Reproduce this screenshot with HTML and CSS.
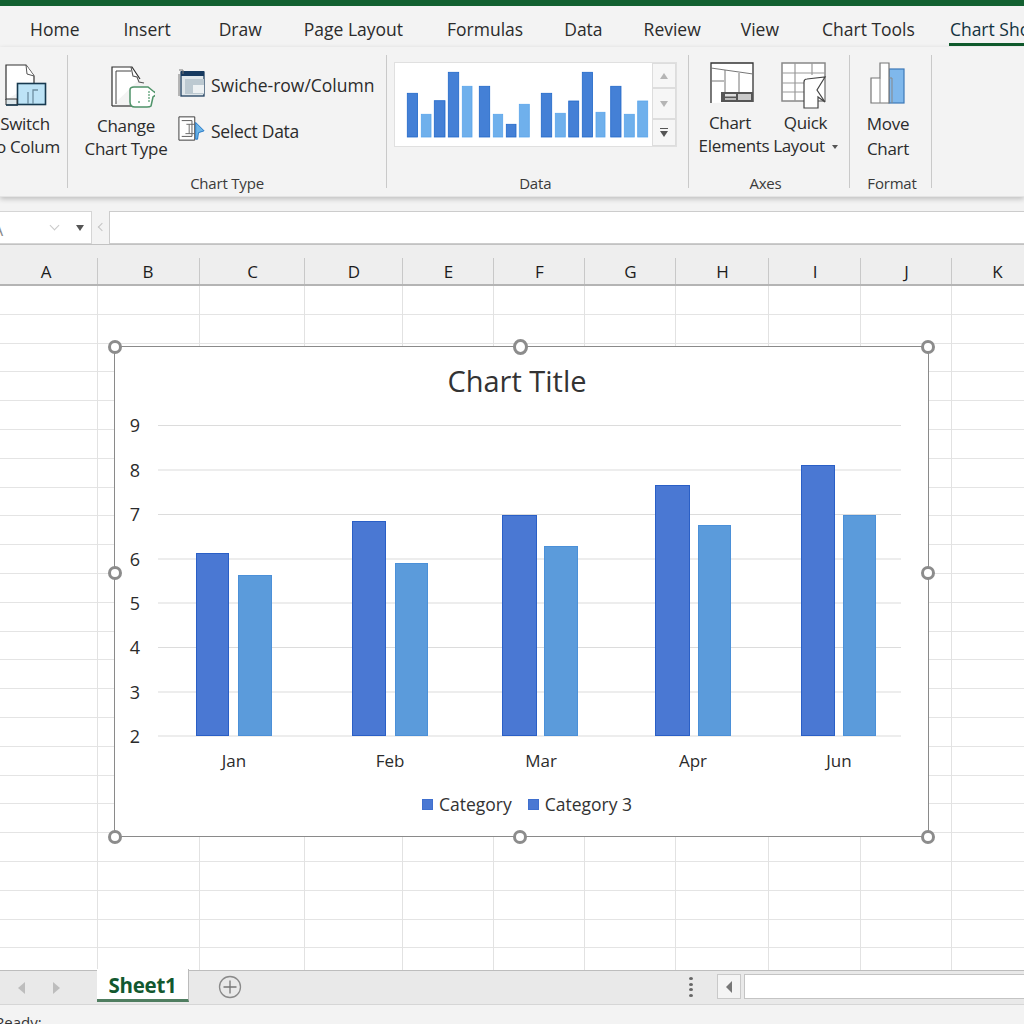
FILE: index.html
```html
<!DOCTYPE html>
<html lang="en">
<head>
<meta charset="utf-8">
<title>Chart Show</title>
<link rel="stylesheet" href="styles.css">
</head>
<body>
<div class="titlebar"></div>
<nav class="tabs">
  <span class="tab">Home</span><span class="tab">Insert</span><span class="tab t-draw">Draw</span><span class="tab t-page">Page Layout</span><span class="tab">Formulas</span><span class="tab t-data">Data</span><span class="tab t-review">Review</span><span class="tab t-view">View</span><span class="tab t-tools">Chart Tools</span><span class="tab active">Chart Show</span>
</nav>
<section class="ribbon">
  <div class="group g-switch">
    <div class="big-btn switch-btn">
      <svg class="icon" width="50" height="44" viewBox="0 0 50 44"><path d="M5 37V2h20l8 11v7" fill="#fff" stroke="#333" stroke-width="1.2"/><path d="M25 2l1 9 7 2" fill="#fff" stroke="#555"/><rect x="16.500" y="20.500" width="28" height="21" fill="#bde3f6" stroke="#17394f" stroke-width="1.600"/><path d="M5 42V36h11v6z" fill="#dce6ea" stroke="#333"/><path d="M5 42h12" stroke="#17394f" stroke-width="1.500"/><path d="M27 41V29M32 41V27h5" stroke="#6d8ea0" stroke-width="1.300" fill="none"/></svg>
      <span class="btn-text">Switch<br>to Colum</span>
    </div>
  </div>
  <div class="group g-type">
    <div class="group-body type-body">
      <div class="big-btn change-btn">
        <svg class="icon" width="44" height="42" viewBox="0 0 44 42"><path d="M1 40V1h20l8 12" fill="#fff" stroke="#2f2f2f" stroke-width="1.200"/><path d="M5 38V5h15" fill="none" stroke="#444"/><path d="M1 40h22" stroke="#2f2f2f" stroke-width="1.200"/><path d="M20 1l2 9 4 1 2 5 5 1" fill="none" stroke="#555" stroke-width="1.100"/><path d="M19 24q0-3 4-3h14l5 4 4 3-4 3-2 9q-1 1-4 1H24q-5 0-5-5z" fill="#fff" stroke="#4f9369" stroke-width="1.500"/><path d="M27 36h2M38 25v11" stroke="#6aa982" stroke-width="1.400" stroke-dasharray="2 1"/></svg>
        <span class="btn-text">Change<br>Chart Type</span>
      </div>
      <div class="small-col">
        <div class="small-btn"><svg width="27" height="28" viewBox="0 0 27 28"><rect x="3" y="3" width="23" height="24" fill="#dfe6ea" stroke="#1f3f5f" stroke-width="1.300"/><rect x="3" y="2" width="23" height="5" fill="#16395f"/><rect x="7" y="10" width="19" height="15" fill="#bcc9d1"/><rect x="15" y="16" width="11" height="8" fill="#edf1f3"/><path d="M1 1h4v4M1 5v22" fill="none" stroke="#777"/></svg><span>Swiche-row/Column</span></div>
        <div class="small-btn select-btn"><svg width="27" height="27" viewBox="0 0 29 27"><path d="M1 1h17v25H1z" fill="#fff" stroke="#333"/><path d="M4 5h11v17H4" fill="none" stroke="#555"/><path d="M9 9h9M12 9v10M8 19h10" stroke="#666" fill="none"/><path d="M19 7l9 9-6 2-1 7h-2z" fill="#6fb6e8" stroke="#1d73c4"/></svg><span>Select Data</span></div>
      </div>
    </div>
    <div class="group-label">Chart Type</div>
  </div>
  <div class="group g-data">
    <div class="group-body data-body">
      <div class="gallery">
        <svg width="258" height="84" viewBox="394 62 258 84">
          <g class="gal-dark"><rect x="407.300" y="93.300" width="10.300" height="43.700"/><rect x="434.300" y="100.700" width="10.700" height="36.300"/><rect x="448.300" y="72.300" width="10.400" height="64.700"/><rect x="479.300" y="86.300" width="10.400" height="50.700"/><rect x="506.300" y="124.300" width="9.700" height="12.700"/><rect x="541.300" y="93.300" width="10.400" height="43.700"/><rect x="568.700" y="101" width="10" height="36"/><rect x="582.300" y="72.300" width="10.300" height="64.700"/><rect x="610.700" y="86.300" width="10.300" height="50.700"/></g>
          <g class="gal-light"><rect x="421.300" y="114.300" width="9.700" height="22.700"/><rect x="462.300" y="86.300" width="9.700" height="50.700"/><rect x="493.300" y="114.300" width="9.400" height="22.700"/><rect x="519.300" y="104.300" width="10" height="32.700"/><rect x="555.300" y="113.300" width="10" height="23.700"/><rect x="596" y="112.300" width="9" height="24.700"/><rect x="624.300" y="114.300" width="10" height="22.700"/><rect x="637.700" y="101" width="10" height="36"/></g>
        </svg>
        <div class="gal-scroll">
          <div class="gal-btn up"><i class="tri-up"></i></div>
          <div class="gal-btn down"><i class="tri-down"></i></div>
          <div class="gal-btn more"><i class="more-bar"></i><i class="tri-more"></i></div>
        </div>
      </div>
    </div>
    <div class="group-label">Data</div>
  </div>
  <div class="group g-axes">
    <div class="group-body axes-body">
      <div class="big-btn elements-btn">
        <svg class="icon" width="44" height="42" viewBox="0 0 44 42"><path d="M1 41V1h42v39" fill="#fff" stroke="#333" stroke-width="1.300"/><path d="M1 6l42 6M1 19h13M15 8v26M29 11v24" fill="none" stroke="#777"/><rect x="11" y="30" width="32" height="10" fill="#555"/><rect x="15" y="32" width="11" height="2.500" fill="#ddd"/><rect x="15" y="36" width="11" height="2" fill="#bbb"/><rect x="28" y="32" width="13" height="6" fill="#c9c9c9"/></svg>
        <span class="btn-text"><span class="chart-line">Chart</span><br>Elements</span>
      </div>
      <div class="big-btn layout-btn">
        <svg class="icon" width="46" height="47" viewBox="0 0 46 47"><rect x="1" y="1" width="43" height="38" fill="#fff" stroke="#888" stroke-width="1.500"/><path d="M1 11h43M1 21h25M1 30h22M14 1v38M31 1v12" stroke="#999" fill="none" stroke-width="1.200"/><path d="M23 46V20q0-3 3-3l18-2-8 13 8 12-7-5v11z" fill="#fff" stroke="#444" stroke-width="1.200"/></svg>
        <span class="btn-text">Quick<br>Layout<i class="caret"></i></span>
      </div>
    </div>
    <div class="group-label">Axes</div>
  </div>
  <div class="group g-format">
    <div class="group-body format-body">
      <div class="big-btn move-btn">
        <svg class="icon" width="36" height="42" viewBox="0 0 36 42"><rect x="19" y="7" width="15" height="34" fill="#7fb8ec" stroke="#3c78b8" stroke-width="1.200"/><path d="M1 41V16h9V1h9v40z" fill="#fff" stroke="#777" stroke-width="1.200"/><path d="M10 16v25M19 16h3v25" stroke="#888" fill="none"/></svg>
        <span class="btn-text">Move<br>Chart</span>
      </div>
    </div>
    <div class="group-label">Format</div>
  </div>
</section>
<section class="formula-bar">
  <div class="name-box"><span class="name-val">A</span><span class="name-chev"></span><i class="tri-name"></i></div>
  <span class="fx-mark"></span>
  <div class="formula-input"></div>
</section>
<div class="col-headers">
  <span class="ch w-a">A</span><span class="ch w-b">B</span><span class="ch w-c">C</span><span class="ch w-d">D</span><span class="ch w-e">E</span><span class="ch w-f">F</span><span class="ch w-g">G</span><span class="ch w-h">H</span><span class="ch w-i">I</span><span class="ch w-j">J</span><span class="ch w-k">K</span>
</div>
<main class="sheet">
  <div class="cols">
    <i class="w-a"></i><i class="w-b"></i><i class="w-c"></i><i class="w-d"></i><i class="w-e"></i><i class="w-f"></i><i class="w-g"></i><i class="w-h"></i><i class="w-i"></i><i class="w-j"></i><i class="w-k"></i>
  </div>
  <div class="chart">
    <h1 class="chart-title">Chart Title</h1>
    <svg class="plot" width="813" height="365" viewBox="115 410 813 365">
      <g class="gridlines">
        <path d="M158 425.500H901M158 470H901M158 514.500H901M158 559H901M158 603H901M158 647.500H901M158 692H901M158 736H901"/>
      </g>
      <g class="ylabels">
        <text x="135" y="432">9</text><text x="135" y="477">8</text><text x="135" y="521">7</text><text x="135" y="566">6</text><text x="135" y="610">5</text><text x="135" y="654">4</text><text x="135" y="699">3</text><text x="135" y="743">2</text>
      </g>
      <g class="s1">
        <rect x="196.500" y="553.500" width="32" height="182"/><rect x="352.500" y="521.500" width="33" height="214"/><rect x="502.500" y="515.500" width="34" height="220"/><rect x="655.500" y="485.500" width="34" height="250"/><rect x="801.500" y="465.500" width="33" height="270"/>
      </g>
      <g class="s2">
        <rect x="238.500" y="575.500" width="33" height="160"/><rect x="395.500" y="563.500" width="32" height="172"/><rect x="544.500" y="546.500" width="33" height="189"/><rect x="698.500" y="525.500" width="32" height="210"/><rect x="843.500" y="515.500" width="32" height="220"/>
      </g>
      <g class="xlabels">
        <text x="234" y="767">Jan</text><text x="390" y="767">Feb</text><text x="541" y="767">Mar</text><text x="693" y="767">Apr</text><text x="839" y="767">Jun</text>
      </g>
    </svg>
    <div class="legend">
      <span class="key"><i></i>Category</span>
      <span class="key"><i></i>Category 3</span>
    </div>
    <i class="handle h-tl"></i><i class="handle h-tc"></i><i class="handle h-tr"></i>
    <i class="handle h-ml"></i><i class="handle h-mr"></i>
    <i class="handle h-bl"></i><i class="handle h-bc"></i><i class="handle h-br"></i>
  </div>
</main>
<footer class="sheet-bar">
  <div class="nav-arrows"><i class="arrow-l"></i><i class="arrow-r"></i></div>
  <div class="sheet-tab">Sheet1</div>
  <div class="add-sheet"><svg width="24" height="24" viewBox="0 0 24 24"><circle cx="12" cy="12" r="10.500" fill="none" stroke="#8a8a8a" stroke-width="1.300"/><path d="M12 5.500v13M5.500 12h13" stroke="#777" stroke-width="1.300"/></svg></div>
  <div class="dots"><i></i><i></i><i></i><i></i></div>
  <div class="scroll-left"><i class="arrow-s"></i></div>
  <div class="scroll-track"></div>
</footer>
<div class="status"><span>Ready:</span></div>
</body>
</html>
```
FILE: styles.css
```css
* { box-sizing: border-box; }
html, body { margin: 0; height: 1024px; overflow: hidden; }
body {
  width: 1024px;
  display: flex;
  flex-direction: column;
  background: #f3f3f3;
  font-family: "Open Sans", "Noto Sans", sans-serif;
  color: #2b2b2b;
}
.titlebar { height: 6px; background: #136131; flex: none; }

.tabs {
  height: 41px;
  flex: none;
  display: flex;
  gap: 44px;
  padding: 9px 0 0 30px;
  font-size: 17.500px;
  line-height: 28px;
  white-space: nowrap;
  overflow: hidden;
}
.tab { flex: none; height: 32px; }
.t-draw { margin-left: 4px; }
.t-page { margin-left: -2px; }
.t-data { margin-left: -3px; }
.t-review { margin-left: -3px; }
.t-view { margin-left: -4px; }
.t-tools { margin-left: -1px; }
.tab.active { color: #12323f; border-bottom: 3px solid #0f5a2c; margin-left: -10px; padding-left: 1px; height: 31px; }

.ribbon {
  height: 150px;
  flex: none;
  display: flex;
  align-items: stretch;
  padding-bottom: 8px;
  padding-top: 8px;
  box-shadow: 0 2px 5px rgba(0,0,0,.22);
  border-bottom: 1px solid #e4e4e4;
  position: relative;
  font-size: 17px;
  letter-spacing: -0.300px;
}
.group {
  flex: none;
  border-right: 1.500px solid #c9c9c9;
  display: flex;
  flex-direction: column;
  align-items: center;
}
.group-body { flex: 1; display: flex; width: 100%; }
.group-label { font-size: 15px; line-height: 20px; height: 19px; color: #3a3a3a; margin-bottom: -4px; letter-spacing: -0.200px; }
.g-switch { width: 68px; }
.g-type { width: 319px; }
.g-data { width: 301.500px; }
.g-axes { width: 161px; }
.g-format { width: 82px; }
.g-data .group-label { margin-right: 4px; }
.g-axes .group-label { margin-right: 6px; }
.g-format .group-label { margin-left: 4px; }

.big-btn { display: flex; flex-direction: column; align-items: center; flex: none; }
.icon { display: block; flex: none; }
.btn-text { text-align: center; line-height: 23px; white-space: nowrap; display: block; }
.switch-btn { margin: 8px 0 0 -17px; width: 70px; }
.switch-btn .icon { margin-bottom: 5px; margin-right: -1px; }
.type-body { padding-left: 16px; gap: 10px; }
.change-btn { margin-top: 11px; width: 84px; }
.change-btn .icon { margin: 0 0 6px 14px; }
.small-col { display: flex; flex-direction: column; gap: 17px; padding-top: 14px; }
.small-btn { display: flex; align-items: center; gap: 6px; white-space: nowrap; height: 28px; font-size: 17.500px; letter-spacing: 0; }
.small-btn span { padding-top: 4px; }
.select-btn { letter-spacing: -0.300px; }
.select-btn span { padding-top: 6px; }

.data-body { padding: 7px 0 0 6.500px; }
.gallery {
  width: 283px; height: 85px;
  display: flex;
  background: #fff;
  border: 1px solid #e0e0e0;
}
.gallery svg { display: block; flex: none; margin: -1px 0 0 -1px; }
.gal-dark rect { fill: #4480d6; stroke: #2268c9; stroke-width: .8; }
.gal-light rect { fill: #6fb0ec; stroke: #5aa5ec; stroke-width: .8; }
.gal-scroll { display: flex; flex-direction: column; width: 24px; background: #f5f5f5; flex: none; }
.gal-btn { border: 1px solid #ddd; display: flex; flex-direction: column; align-items: center; justify-content: center; background: #f6f6f6; }
.gal-btn.up { height: 25px; }
.gal-btn.down { height: 31px; }
.gal-btn.more { height: 27px; gap: 2px; }
.tri-up { border: 4px solid transparent; border-bottom: 6px solid #b5b5b5; border-top: 0; width: 0; height: 0; }
.tri-down { border: 4px solid transparent; border-top: 6px solid #b5b5b5; border-bottom: 0; width: 0; height: 0; }
.tri-more { border: 4.500px solid transparent; border-top: 6px solid #555; border-bottom: 0; width: 0; height: 0; }
.more-bar { width: 8px; height: 1px; background: #555; display: block; }

.axes-body { padding-left: 6.500px; }
.elements-btn { width: 78px; margin-top: 7px; }
.elements-btn .icon { margin: 0 0 7px -5px; }
.chart-line { display: inline-block; padding-right: 8px; }
.layout-btn { width: 65px; margin-top: 7px; }
.layout-btn .icon { margin: 0 0 2px -3px; }
.caret { display: inline-block; border: 3.500px solid transparent; border-top: 4px solid #555; border-bottom: 0; margin-left: 7px; vertical-align: middle; }
.format-body { justify-content: center; padding-right: 4px; }
.move-btn { margin-top: 7px; }
.move-btn .icon { margin: 0 0 7px 0; }
.move-btn .btn-text { line-height: 25px; }

.formula-bar {
  height: 47px;
  flex: none;
  display: flex;
  align-items: flex-start;
  padding-top: 14px;
  background: #f3f3f3;
}
.name-box {
  width: 93px; height: 33px;
  margin-left: -1px;
  background: #fff;
  border: 1px solid #d5d5d5;
  display: flex;
  align-items: center;
  overflow: hidden;
  color: #8a8a8a;
  font-size: 16px;
}
.name-val { margin: 4px 0 0 -7px; width: 57px; }
.name-chev { width: 7px; height: 7px; border-right: 1px solid #c9c9c9; border-bottom: 1px solid #c9c9c9; transform: rotate(45deg); margin: -4px 0 0 1px; }
.tri-name { border: 4px solid transparent; border-top: 6px solid #555; border-bottom: 0; margin-left: 18px; width: 0; height: 0; }
.fx-mark { width: 6px; height: 6px; border-left: 1px solid #c4c4c4; border-bottom: 1px solid #c4c4c4; transform: rotate(45deg); margin: 13px 0 0 7px; flex: none; }
.formula-input { flex: 1; height: 33px; margin-left: 4px; background: #fff; border: 1px solid #ccc; border-right: 0; }

.col-headers {
  height: 42px;
  flex: none;
  display: flex;
  background: #eeeeee;
  border-top: 1px solid #c2c2c2;
  border-bottom: 2px solid #b4b4b4;
  margin-left: -4px;
  width: 1040px;
}
.ch {
  display: flex;
  align-items: flex-end;
  justify-content: center;
  font-size: 17px;
  line-height: 24px;
  color: #1c1c1c;
  position: relative;
  flex: none;
}
.ch::after { content: ""; position: absolute; right: 0; bottom: 0; height: 26px; width: 1px; background: #c8c8c8; }
.w-a { width: 102px; padding-right: 2px; }
.w-b { width: 102px; padding-right: 2px; }
.w-c { width: 105px; }
.w-d { width: 98px; }
.w-e { width: 91px; }
.w-f { width: 91px; }
.w-g { width: 91px; }
.w-h { width: 93px; }
.w-i { width: 92px; }
.w-j { width: 91px; }
.w-k { width: 91px; }

.sheet {
  flex: 1;
  position: relative;
  background-color: #fff;
  background-image: repeating-linear-gradient(to bottom, transparent 0, transparent 27.800px, #e4e4e4 27.800px, #e4e4e4 28.800px);
  overflow: hidden;
}
.cols { display: flex; height: 100%; margin-left: -4px; width: 1040px; }
.cols i { display: block; flex: none; border-right: 1px solid #e2e2e2; }

.chart {
  position: absolute;
  left: 114px;
  top: 60px;
  width: 815px;
  height: 491px;
  background: #fff;
  border: 1.500px solid #8a8a8a;
  display: flex;
  flex-direction: column;
  align-items: center;
}
.chart-title { margin: 15px 0 0 -9px; font-size: 29px; line-height: 38px; font-weight: 400; color: #333; height: 48px; flex: none; }
.plot { display: block; flex: none; width: 813px; height: 365px; }
.gridlines path { stroke: #dcdcdc; stroke-width: 1.200; fill: none; }
.ylabels text { font-size: 18px; text-anchor: middle; fill: #2b2b2b; }
.xlabels text { font-size: 17px; text-anchor: middle; fill: #2b2b2b; }
.s1 rect { fill: #4a78d3; stroke: #2a5fc6; stroke-width: 1; }
.s2 rect { fill: #5b9bdb; stroke: #4b90d8; stroke-width: 1; }
.legend { display: flex; gap: 16px; margin: 17px 0 0 11px; font-size: 17.500px; line-height: 24px; color: #333; }
.key { display: flex; align-items: center; gap: 6px; }
.key i { width: 11px; height: 11px; background: #4a78d3; border: 1px solid #3f6fce; display: block; }

.handle { position: absolute; width: 14px; height: 14px; border-radius: 50%; background: #fff; border: 3px solid #8c8c8c; }
.h-tl { left: -7.500px; top: -7.500px; }
.h-tc { left: 398px; top: -8.500px; width: 15px; height: 16px; }
.h-tr { right: -6.500px; top: -7.500px; }
.h-ml { left: -7px; top: 219px; }
.h-mr { right: -6.500px; top: 219px; }
.h-bl { left: -7.500px; bottom: -7.500px; }
.h-bc { left: 398px; bottom: -7.500px; }
.h-br { right: -6.500px; bottom: -7.500px; }

.sheet-bar {
  height: 35px;
  flex: none;
  display: flex;
  align-items: flex-start;
  background: #e9e9e9;
  border-top: 1.500px solid #bdbdbd;
  border-bottom: 1px solid #d6d6d6;
  position: relative;
}
.nav-arrows { width: 97px; height: 33px; display: flex; gap: 28px; align-items: center; padding-left: 18px; }
.arrow-l { border: 6px solid transparent; border-right: 7px solid #bdbdbd; border-left: 0; width: 0; height: 0; }
.arrow-r { border: 6px solid transparent; border-left: 7px solid #bdbdbd; border-right: 0; width: 0; height: 0; }
.sheet-tab {
  width: 92px; height: 33px;
  margin-top: -2px;
  background: #fff;
  border-right: 1px solid #bbb;
  border-bottom: 3px solid #4f7d60;
  color: #12582f;
  font-weight: 700;
  font-size: 20.500px;
  line-height: 33px;
  text-align: center;
  letter-spacing: -0.300px;
}
.add-sheet { margin: 4px 0 0 29px; width: 24px; height: 24px; }
.add-sheet svg { display: block; }
.dots { display: flex; flex-direction: column; gap: 2.500px; margin: 6px 0 0 447px; width: 4px; }
.dots i { width: 4px; height: 3px; border-radius: 50%; background: #666; display: block; }
.scroll-left { width: 24px; height: 25px; margin: 3px 0 0 24px; border: 1px solid #c9c9c9; background: #f4f4f4; display: flex; align-items: center; justify-content: center; flex: none; }
.arrow-s { border: 6px solid transparent; border-right: 6px solid #777; border-left: 0; width: 0; height: 0; }
.scroll-track { flex: 1; height: 25px; margin: 3px 0 0 3px; background: #fff; border: 1px solid #c4c4c4; border-right: 0; }

.status { height: 19px; flex: none; overflow: hidden; background: #f3f3f3; font-size: 15px; line-height: 20px; padding-top: 7px; margin-left: -5px; color: #333; }
.status span { display: block; }
```
